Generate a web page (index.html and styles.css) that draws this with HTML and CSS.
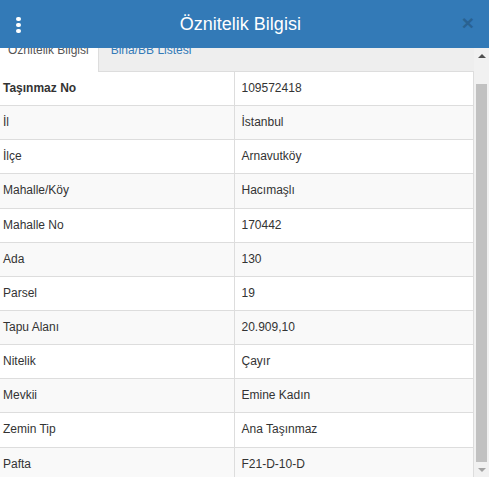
FILE: index.html
```html
<!DOCTYPE html>
<html lang="tr">
<head>
<meta charset="utf-8">
<title>Öznitelik Bilgisi</title>
<link rel="stylesheet" href="styles.css">
</head>
<body>
<div class="panel">
  <header class="header">
    <span class="kebab"><i></i><i></i><i></i></span>
    <h1 class="title">Öznitelik Bilgisi</h1>
    <span class="close">×</span>
  </header>
  <div class="body">
    <div class="content" id="scroller">
      <ul class="tabs">
        <li class="tab active">Öznitelik Bilgisi</li>
        <li class="tab">Bina/BB Listesi</li>
      </ul>
      <table class="attrs">
        <tbody>
          <tr><td class="key strong">Taşınmaz No</td><td class="val">109572418</td></tr>
          <tr><td class="key">İl</td><td class="val">İstanbul</td></tr>
          <tr><td class="key">İlçe</td><td class="val">Arnavutköy</td></tr>
          <tr><td class="key">Mahalle/Köy</td><td class="val">Hacımaşlı</td></tr>
          <tr><td class="key">Mahalle No</td><td class="val">170442</td></tr>
          <tr><td class="key">Ada</td><td class="val">130</td></tr>
          <tr><td class="key">Parsel</td><td class="val">19</td></tr>
          <tr><td class="key">Tapu Alanı</td><td class="val">20.909,10</td></tr>
          <tr><td class="key">Nitelik</td><td class="val">Çayır</td></tr>
          <tr><td class="key">Mevkii</td><td class="val">Emine Kadın</td></tr>
          <tr><td class="key">Zemin Tip</td><td class="val">Ana Taşınmaz</td></tr>
          <tr><td class="key">Pafta</td><td class="val">F21-D-10-D</td></tr>
        </tbody>
      </table>
    </div>
    <div class="scrollbar">
      <span class="arrow up"></span>
      <span class="track"><span class="thumb"></span></span>
      <span class="arrow down"></span>
    </div>
  </div>
</div>
<script src="script.js"></script>
</body>
</html>
```

FILE: styles.css
```css
* { box-sizing: border-box; }
html, body { margin: 0; padding: 0; }
body {
  font-family: "Liberation Sans", Arial, sans-serif;
  font-size: 12px;
  color: #333;
  background: #fff;
}
.panel { width: 489px; height: 477px; display: flex; flex-direction: column; overflow: hidden; }
.header {
  height: 48px;
  flex: none;
  background: #337ab7;
  display: flex;
  align-items: center;
  padding: 0 15px 0 16px;
}
.kebab {
  display: flex;
  flex-direction: column;
  gap: 1.5px;
  width: 5px;
  margin-top: 2px;
}
.kebab i {
  display: block;
  width: 4.5px;
  height: 4.5px;
  border-radius: 50%;
  background: #fff;
}
.title {
  flex: 1;
  margin: 0;
  text-align: center;
  color: #fff;
  font-size: 18px;
  font-weight: normal;
  line-height: 20px;
  margin-left: -2px;
}
.close {
  color: #296292;
  font-size: 21px;
  font-weight: bold;
  line-height: 1;
  margin-top: -4px;
}
.body {
  height: 429px;
  display: flex;
}
.content {
  width: 474px;
  height: 429px;
  overflow: hidden;
}
.tabs {
  list-style: none;
  margin: 0;
  padding: 0;
  display: flex;
  background: #eee;
  border-bottom: 1px solid #ddd;
  height: 42px;
}
.tab {
  padding: 12px 12px 12px 12px;
  line-height: 17px;
  color: #337ab7;
}
.tab.active {
  background: #fff;
  color: #555;
  padding: 12px 9px 12px 8px;
  border-right: 1px solid #ddd;
  margin-bottom: -1px;
  height: 42px;
}
.attrs {
  width: 474px;
  border-collapse: collapse;
  table-layout: fixed;
}
.attrs td {
  padding: 8px 7px;
  line-height: 17.14px;
  border-top: 1px solid #ddd;
  vertical-align: top;
}
.attrs tr:first-child td { border-top: none; }
.attrs tr:nth-child(even) td { background: #f9f9f9; }
.attrs .key { width: 234px; padding-left: 3px; }
.attrs .val { border-left: 1px solid #ddd; border-right: 1px solid #ddd; }
.attrs .strong { font-weight: bold; }

.scrollbar {
  width: 15px;
  flex: none;
  background: #f1f1f1;
  display: flex;
  flex-direction: column;
}
.arrow {
  height: 15px;
  flex: none;
  display: flex;
  align-items: center;
  justify-content: center;
}
.arrow::before {
  content: "";
  width: 0;
  height: 0;
  border-left: 4px solid transparent;
  border-right: 4px solid transparent;
}
.arrow.up::before { border-bottom: 4px solid #505050; }
.arrow.down::before { border-top: 4px solid #a3a3a3; }
.track {
  flex: 1;
  display: flex;
  flex-direction: column;
  padding: 21px 2px 0 2px;
}
.thumb {
  flex: 1;
  background: #c1c1c1;
}
```

FILE: script.js
```js
document.getElementById('scroller').scrollTop = 18;
```
